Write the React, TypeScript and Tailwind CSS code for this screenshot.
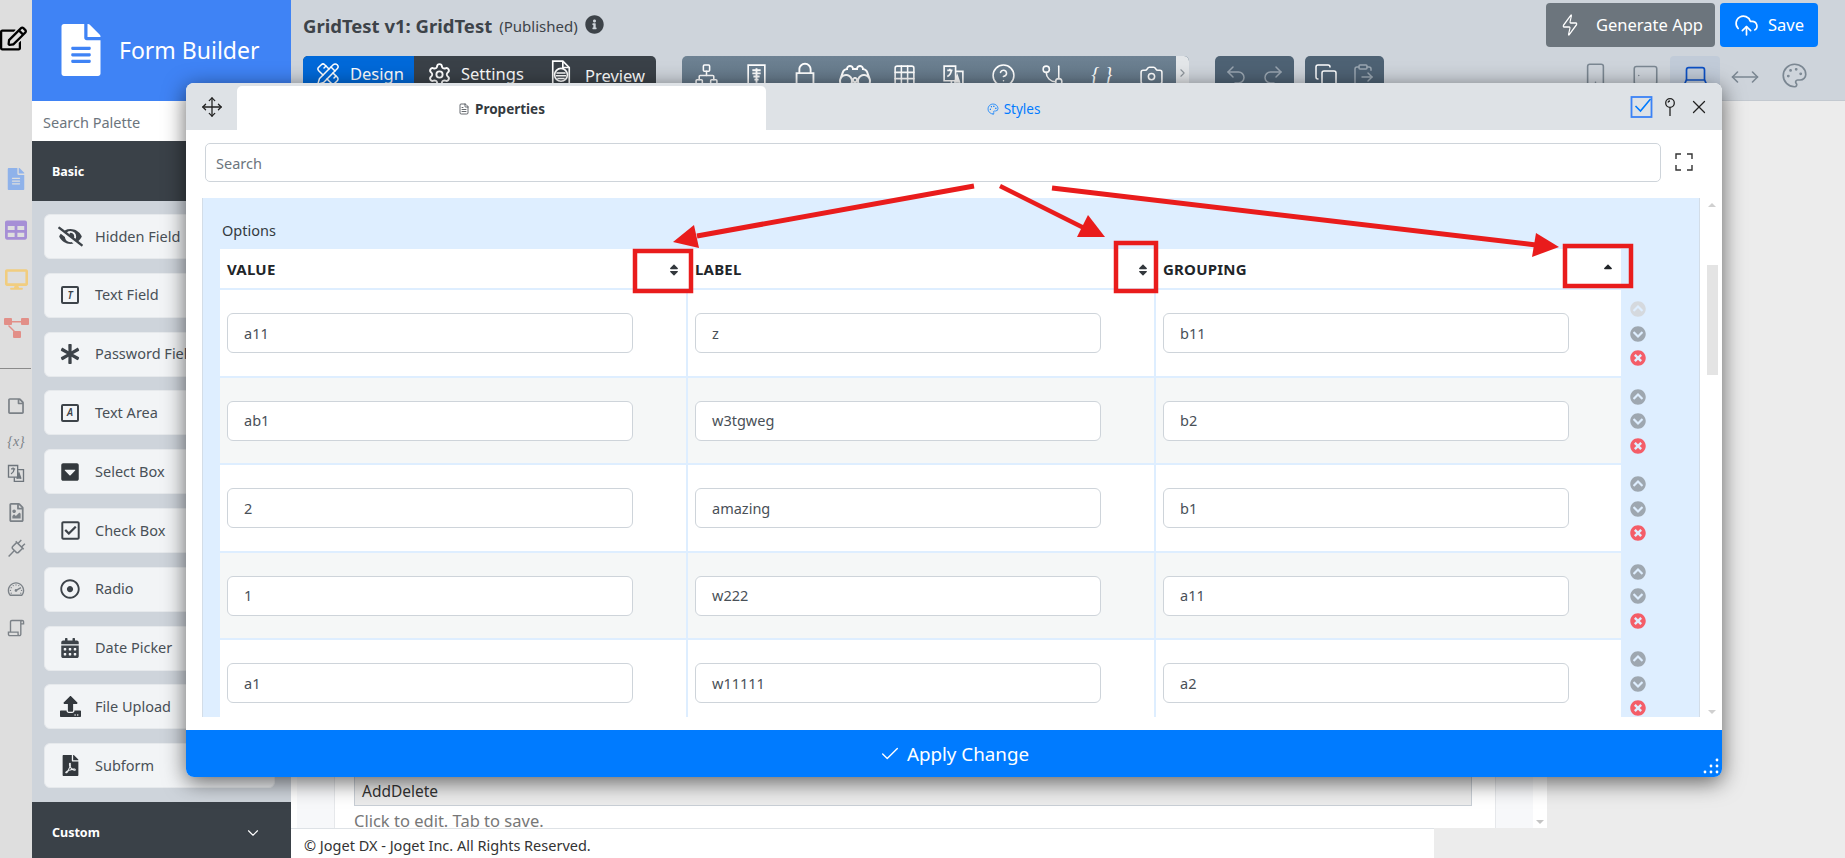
import React from "react";
import {
  Network, Grid3x3, CircleHelp, GitBranch, Camera, Undo2, Redo2, Copy, ClipboardPaste,
  Smartphone, Tablet, Laptop, MoveHorizontal, Palette, CloudUpload, Zap, Settings, FileText,
  Move, X, Check, PencilRuler, ChevronDown, ChevronRight,
} from "lucide-react";
import {
  FaEyeSlash, FaAsterisk, FaCaretSquareDown, FaRegCheckSquare, FaRegDotCircle, FaCalendarAlt, FaUpload, FaFilePdf,
  FaFileAlt, FaRegEdit, FaTable, FaDesktop, FaRegStickyNote, FaRegFileImage, FaInfoCircle, FaSort, FaSortUp, FaChevronCircleUp,
  FaChevronCircleDown, FaTimesCircle,
} from "react-icons/fa";
import { LiaPlugSolid, LiaTachometerAltSolid, LiaScrollSolid, LiaBinocularsSolid, LiaLockSolid } from "react-icons/lia";

// boxed letter used by Text Field / Text Area
const LetterBox = ({ letter }: { letter: string }) => (
  <span className="w-[18px] h-[18px] border-2 border-[#3d4349] rounded-[2px] flex items-center justify-center text-[10px] italic font-semibold text-[#3d4349]">
    {letter}
  </span>
);

const TranslateIcon = ({ className }: { className: string }) => (
  <svg viewBox="0 0 24 24" fill="none" stroke="currentColor" strokeWidth="1.6" className={className}>
    <path d="M3 3h11v14H3z" />
    <path d="M14 8h7v14H10v-5" />
    <path d="M6 7h5M8.500 5.500V7M10 7c-.5 3-2 5-4 6" />
    <path d="M13 19l2.500-7 2.500 7" fill="currentColor" />
  </svg>
);

const SpineIcon = () => (
  <svg viewBox="0 0 24 24" className="w-[25px] h-[25px]" fill="none" stroke="currentColor" strokeWidth="1.600">
    <path d="M4 2h16v20H4z" />
    <path d="M12 5v14M8 7h8M8 10h8M9 13h6M10 16h4" strokeWidth="1.800" />
  </svg>
);

const PreviewIcon = () => (
  <svg viewBox="0 0 24 28" className="w-[22px] h-[26px] mt-[-4px]" fill="none" stroke="currentColor" strokeWidth="1.800">
    <path d="M14 1H3v26h18V8z" />
    <path d="M14 1v7h7" />
    <circle cx="12" cy="16" r="7" fill="#3a4148" />
    <path d="M7 14h10M6.500 17h11M8 20h8" strokeWidth="1.400" />
  </svg>
);

const palette = [
  { icon: <FaEyeSlash size={25} className="text-[#3d4349]" />, label: "Hidden Field" },
  { icon: <LetterBox letter="T" />, label: "Text Field" },
  { icon: <FaAsterisk size={20} className="text-[#3d4349]" />, label: "Password Field" },
  { icon: <LetterBox letter="A" />, label: "Text Area" },
  { icon: <FaCaretSquareDown size={20} className="text-[#33383d]" />, label: "Select Box" },
  { icon: <FaRegCheckSquare size={21} className="text-[#3d4349]" />, label: "Check Box" },
  { icon: <FaRegDotCircle size={20} className="text-[#3d4349]" />, label: "Radio" },
  { icon: <FaCalendarAlt size={20} className="text-[#3d4349]" />, label: "Date Picker" },
  { icon: <FaUpload size={21} className="text-[#33383d]" />, label: "File Upload" },
  { icon: <FaFilePdf size={21} className="text-[#33383d]" />, label: "Subform" },
];

const rows = [
  ["a11", "z", "b11"],
  ["ab1", "w3tgweg", "b2"],
  ["2", "amazing", "b1"],
  ["1", "w222", "a11"],
  ["a1", "w11111", "a2"],
];

const Rail = () => (
  <div className="w-[32px] shrink-0 bg-[#dedede] flex flex-col items-center">
    <FaRegEdit size={27} className="mt-[25px] ml-[-5px] text-black" />
    <FaFileAlt size={22} className="mt-[116px] text-[#8fb2ea]" />
    <FaTable size={22} className="mt-[29px] text-[#a68fd6]" />
    <FaDesktop size={23} className="mt-[27px] text-[#f1cd7f]" />
    <svg viewBox="0 0 25 20" className="mt-[27px] w-[25px] h-[20px] text-[#e28f88]" fill="currentColor">
      <rect x="0" y="0" width="8" height="7" rx="1" />
      <rect x="17" y="0" width="8" height="7" rx="1" />
      <rect x="9" y="13" width="8" height="7" rx="1" />
      <path d="M8 3h9v1.500H8zM5 7l6 6-1 1-6-6z" />
    </svg>
    <div className="w-full h-px bg-[#8a8a8a] mt-[30px] -ml-[3px]" />
    <FaRegStickyNote size={18} className="mt-[28px] text-[#7b8187] -scale-y-100" />
    <span className="mt-[17px] text-[14px] italic text-[#7b8187] font-['Liberation_Serif',serif] h-[20px] leading-[20px]">{"{x}"}</span>
    <TranslateIcon className="mt-[11px] w-[20px] h-[20px] text-[#6e757c]" />
    <FaRegFileImage size={19} className="mt-[20px] text-[#7b8187]" />
    <LiaPlugSolid size={23} className="mt-[15px] text-[#7b8187]" />
    <LiaTachometerAltSolid size={22} className="mt-[18px] text-[#7b8187]" />
    <LiaScrollSolid size={22} className="mt-[17px] text-[#7b8187]" />
  </div>
);

const Sidebar = () => (
  <div className="w-[259px] shrink-0 flex flex-col bg-[#ced4db]">
    <div className="h-[101px] bg-[#3f83f5] flex items-center text-white">
      <FaFileAlt size={52} className="ml-[23px] mt-[-2px]" />
      <span className="ml-[12px] text-[23px] leading-none">Form Builder</span>
    </div>
    <div className="h-[40px] bg-white flex items-center pl-[11px] pt-[3px] text-[14.500px] text-[#6c757d]">Search Palette</div>
    <div className="h-[60px] bg-[#3a4148] flex items-center pl-[20px] pt-[3px] text-[12.500px] font-bold text-white">Basic</div>
    <div className="flex-1 flex flex-col gap-[13.800px] pt-[13px] pl-[12px] pr-[16px]">
      {palette.map((item) => (
        <div key={item.label} className="h-[45px] shrink-0 flex items-center bg-[#f2f4f6] border border-[#e6e9ec] rounded-[6px] whitespace-nowrap overflow-hidden">
          <span className="w-[50px] shrink-0 flex justify-center">{item.icon}</span>
          <span className="text-[14.500px] text-[#495057]">{item.label}</span>
        </div>
      ))}
    </div>
    <div className="h-[56px] bg-[#3a4148] flex items-center justify-between pl-[20px] pr-[29px] pt-[6px] text-[12.500px] font-bold text-white">
      Custom
      <ChevronDown size={18} strokeWidth={1.5} />
    </div>
  </div>
);

const Topbar = () => (
  <div className="h-[101px] shrink-0 bg-[#ced4db] border-b border-[#c3c9d0] flex flex-col pl-[12px] pr-[27px]">
    <div className="h-[47px] pt-[3px] flex">
      <div className="flex items-center h-[44px] mt-[1px] text-[#3d4349]">
        <span className="text-[18.500px] font-bold">GridTest v1: GridTest</span>
        <span className="ml-[7px] text-[15px]">(Published)</span>
        <FaInfoCircle size={19} className="ml-[7px] mt-[-3px]" />
      </div>
      <button className="ml-auto w-[169px] h-[44px] bg-[#6c757d] rounded-[4px] text-white text-[16.500px] flex items-center justify-center gap-[14px]">
        <Zap size={24} strokeWidth={1.5} className="scale-x-75" />Generate App
      </button>
      <button className="ml-[5px] w-[98px] h-[44px] bg-[#007bff] rounded-[4px] text-white text-[16.500px] flex items-center justify-center gap-[9px]">
        <CloudUpload size={25} strokeWidth={1.6} />Save
      </button>
    </div>
    <div className="mt-[9px] h-[40px] flex text-white text-[16.500px]">
      <div className="flex h-full rounded-[5px] overflow-hidden bg-[#3a4148]">
        <div className="w-[111px] bg-[#0069d9] flex items-start pt-[6px] pl-[13px] gap-[10px]"><PencilRuler size={24} strokeWidth={1.5} />Design</div>
        <div className="w-[122px] flex items-start pt-[6px] pl-[13px] gap-[9px]"><Settings size={25} strokeWidth={1.8} />Settings</div>
        <div className="w-[120px] flex items-start pt-[8px] pl-[14px] gap-[13px]"><PreviewIcon />Preview</div>
      </div>
      <div className="ml-[26px] flex h-full rounded-[5px] overflow-hidden bg-gradient-to-b from-[#6e8293] to-[#5f7384]">
        <span className="w-[49.400px] flex justify-center pt-[7px]"><Network size={25} strokeWidth={1.5} /></span>
        <span className="w-[49.400px] flex justify-center pt-[7px]"><SpineIcon /></span>
        <span className="w-[49.400px] flex justify-center pt-[4px]"><LiaLockSolid size={30} /></span>
        <span className="w-[49.400px] flex justify-center pt-[4px]"><LiaBinocularsSolid size={32} /></span>
        <span className="w-[49.400px] flex justify-center pt-[7px]"><Grid3x3 size={25} strokeWidth={1.5} /></span>
        <span className="w-[49.400px] flex justify-center pt-[7px]"><TranslateIcon className="w-[25px] h-[25px]" /></span>
        <span className="w-[49.400px] flex justify-center pt-[7px]"><CircleHelp size={25} strokeWidth={1.5} /></span>
        <span className="w-[49.400px] flex justify-center pt-[7px]"><GitBranch size={25} strokeWidth={1.5} className="-scale-x-100" /></span>
        <span className="w-[49.400px] flex justify-center pt-[3px] text-[20px] italic font-['Liberation_Serif',serif]">{"{ }"}</span>
        <span className="w-[49.400px] flex justify-center pt-[7px]"><Camera size={25} strokeWidth={1.5} /></span>
        <span className="w-[13px] bg-[#e3e6e9] rounded-r-[5px] flex items-start pt-[10px] justify-center text-[#8f969d]"><ChevronRight size={14} /></span>
      </div>
      <div className="ml-[26px] w-[79px] h-full rounded-[5px] bg-[#4e6274] flex justify-around px-[2px] pt-[7px] text-[#9aa6b1]">
        <Undo2 size={24} strokeWidth={1.5} /><Redo2 size={24} strokeWidth={1.5} />
      </div>
      <div className="ml-[11px] w-[79px] h-full rounded-[5px] bg-[#4e6274] flex justify-around px-[2px] pt-[7px] text-white">
        <Copy size={24} strokeWidth={1.5} /><ClipboardPaste size={24} strokeWidth={1.5} className="text-[#9aa6b1]" />
      </div>
      <div className="ml-auto flex h-full text-[#7b8792]">
        <span className="w-[50px] flex justify-center pt-[6px]"><Smartphone size={27} strokeWidth={1.4} /></span>
        <span className="w-[50px] flex justify-center pt-[6px]"><Tablet size={27} strokeWidth={1.4} className="rotate-90" /></span>
        <span className="w-[50px] flex justify-center pt-[6px] bg-[#c1cbd8] rounded-[4px] text-[#0c50c4]"><Laptop size={27} strokeWidth={1.5} /></span>
        <span className="w-[50px] flex justify-center pt-[6px]"><MoveHorizontal size={30} strokeWidth={1.3} /></span>
        <span className="w-[48px] flex justify-center pt-[6px]"><Palette size={27} strokeWidth={1.5} /></span>
      </div>
    </div>
  </div>
);

const Canvas = () => (
  <div className="flex-1 min-h-0 bg-[#ececec] flex flex-col">
    <div className="flex-1 min-h-0 w-[1256px] bg-white flex pl-[6px]">
      <div className="w-[38px] bg-[#f7f8fa] border-r border-[#e6e8eb]" />
      <div className="flex-1 flex flex-col justify-end pl-[19px] pr-[23px]">
        <div className="h-[34px] shrink-0 bg-[#ececec] border border-[#c8ced5] flex items-center pl-[7px] pt-[6px] text-[15.500px] text-[#333]">AddDelete</div>
        <div className="h-[22px] shrink-0 text-[16.500px] leading-[30px] text-[#777]">Click to edit. Tab to save.</div>
      </div>
      <div className="w-[38px] bg-[#f7f8fa] border-l border-[#e6e8eb]" />
      <div className="w-[14px] bg-white flex items-end justify-center pb-[4px]">
        <span className="w-0 h-0 border-x-[4px] border-x-transparent border-t-[4px] border-t-[#c4c4c4]" />
      </div>
    </div>
    <div className="h-[30px] shrink-0 w-[1143px] bg-white border-t border-[#dee2e6] flex items-center pl-[13px] pt-[5px] text-[14.500px] text-[#333]">
      © Joget DX - Joget Inc. All Rights Reserved.
    </div>
  </div>
);

const InputBox = ({ value }: { value: string }) => (
  <div className="h-[40px] w-[406px] bg-white border border-[#ced4da] rounded-[6px] flex items-center pl-[16px] pt-[1px] text-[14.500px] text-[#495057]">
    {value}
  </div>
);

const Modal = () => (
  <div className="absolute left-[186px] top-[83px] w-[1536px] h-[694px] bg-white rounded-[8px] overflow-hidden shadow-[0_5px_22px_rgba(0,0,0,0.6)] flex flex-col">
    <div className="h-[47px] shrink-0 bg-[#dee2e6] flex items-end">
      <span className="w-[51px] h-full flex items-center justify-center text-[#222]"><Move size={22} strokeWidth={1.4} /></span>
      <div className="w-[529px] h-[44px] bg-white rounded-t-[5px] flex items-center justify-center gap-[5px] pt-[2px] text-[13.500px] font-bold text-[#343a40]">
        <FileText size={12} strokeWidth={1.5} />Properties
      </div>
      <div className="w-[495px] h-[44px] flex items-center justify-center gap-[5px] pt-[2px] text-[13.500px] text-[#007bff]">
        <Palette size={12} strokeWidth={1.5} />Styles
      </div>
      <div className="ml-auto h-full flex items-center pr-[12px] text-[#222]">
        <svg viewBox="0 0 22 22" className="w-[23px] h-[22px]" fill="none">
          <rect x="1" y="1" width="20" height="20" stroke="#3b82f6" strokeWidth="1.800" />
          <path d="M5 10l5 5 10-12" stroke="#007bff" strokeWidth="1.600" />
        </svg>
        <svg viewBox="0 0 14 20" className="ml-[10px] w-[14px] h-[20px]" fill="none" stroke="#222" strokeWidth="1.300">
          <circle cx="7" cy="6" r="4.300" />
          <path d="M7 10.500V19M5 5.500a2 2 0 0 1 2-1.500" />
        </svg>
        <X size={22} strokeWidth={1.4} className="ml-[11px]" />
      </div>
    </div>
    <div className="flex-1 min-h-0 flex flex-col">
      <div className="h-[68px] shrink-0 flex items-start pt-[13px] pl-[19px]">
        <div className="w-[1456px] h-[39px] border border-[#ced4da] rounded-[5px] flex items-center pl-[10px] pt-[3px] text-[14.500px] text-[#6c757d]">Search</div>
        <svg viewBox="0 0 18 18" className="ml-[14px] mt-[10px] w-[18px] h-[18px]" fill="none" stroke="#333" strokeWidth="1.400">
          <path d="M1 6V1h5M12 1h5v5M17 12v5h-5M6 17H1v-5" />
        </svg>
      </div>
      <div className="flex-1 min-h-0 flex pl-[16px] pb-[13px]">
        <div className="w-[1499px] h-full bg-[#deeeff] border-l border-r border-[#d3dde8] pl-[17px] overflow-hidden">
          <div className="h-[51px] flex items-center pt-[15px] pl-[2px] text-[14.500px] text-[#343a40]">Options</div>
          <div className="w-[1401px] h-[39px] bg-white flex items-center text-[15px] font-bold text-[#212529] tracking-[0.2px] pt-[2px]">
            <div className="w-[467px] pl-[7px] pr-[5px] flex items-center justify-between">VALUE<FaSort size={14} className="text-[#33383d] mr-[1px]" /></div>
            <div className="w-[468px] pl-[8px] pr-[5px] flex items-center justify-between">LABEL<FaSort size={14} className="text-[#33383d]" /></div>
            <div className="w-[466px] pl-[8px] pr-[5px] flex items-center justify-between">GROUPING<FaSortUp size={14} className="text-[#212529] mr-[1px]" /></div>
          </div>
          {rows.map((row, i) => (
            <div key={i} className="flex h-[87.500px] items-stretch">
              <div className={`w-[1401px] flex border-t-2 border-[#deeeff] ${i % 2 === 1 ? "bg-[#f5f7f7]" : "bg-white"}`}>
                <div className="w-[468px] pl-[7px] pt-[23px] border-r-2 border-[#deeeff]"><InputBox value={row[0]} /></div>
                <div className="w-[468px] pl-[7px] pt-[23px] border-r-2 border-[#deeeff]"><InputBox value={row[1]} /></div>
                <div className="w-[465px] pl-[7px] pt-[23px]"><InputBox value={row[2]} /></div>
              </div>
              <div className="flex-1 flex flex-col gap-[8.500px] pt-[13px] pl-[9px] text-[#9ea7b0]">
                <FaChevronCircleUp size={16} className={i === 0 ? "text-[#d5d9de]" : ""} />
                <FaChevronCircleDown size={16} />
                <FaTimesCircle size={16} className="text-[#f45d68]" />
              </div>
            </div>
          ))}
        </div>
        <div className="w-[17px] relative ml-[5px]">
          <span className="absolute left-[3px] top-[5px] w-0 h-0 border-x-[4px] border-x-transparent border-b-[4px] border-b-[#d0d0d0]" />
          <span className="absolute left-[2px] top-[67px] w-[11px] h-[110px] bg-[#e4e4e4]" />
          <span className="absolute left-[3px] bottom-[3px] w-0 h-0 border-x-[4px] border-x-transparent border-t-[4px] border-t-[#d0d0d0]" />
        </div>
      </div>
    </div>
    <div className="h-[47px] shrink-0 bg-[#007bff] relative flex items-center justify-center gap-[6px] pt-[1px] text-white text-[18.800px]">
      <Check size={22} strokeWidth={1.5} />Apply Change
      <svg viewBox="0 0 16 16" className="absolute right-[3px] bottom-[3px] w-[16px] h-[16px]" fill="white">
        <circle cx="14" cy="2" r="1.400" /><circle cx="8" cy="8" r="1.400" /><circle cx="14" cy="8" r="1.400" />
        <circle cx="2" cy="14" r="1.400" /><circle cx="8" cy="14" r="1.400" /><circle cx="14" cy="14" r="1.400" />
      </svg>
    </div>
  </div>
);

// red annotation arrows and boxes drawn over the screenshot
const Annotations = () => (
  <svg className="absolute inset-0 w-[1845px] h-[858px] pointer-events-none" viewBox="0 0 1845 858" fill="none">
    <g stroke="#e91c1c">
      <path d="M974 186L697 236" strokeWidth="5" />
      <path d="M1000 186L1084 228" strokeWidth="4.500" />
      <path d="M1052 188L1536 245" strokeWidth="5" />
      <rect x="635" y="251" width="56" height="40" strokeWidth="4.500" />
      <rect x="1116" y="243" width="40" height="48" strokeWidth="4.500" />
      <rect x="1565" y="246" width="66" height="40" strokeWidth="4.500" />
    </g>
    <g fill="#e91c1c">
      <path d="M673 242L694 225L699 248Z" />
      <path d="M1105 237L1088 215L1077 237Z" />
      <path d="M1559 247L1536 233L1532 257Z" />
    </g>
  </svg>
);

export default function App() {
  return (
    <div className="relative w-[1845px] h-[858px] overflow-hidden flex font-['Noto_Sans',sans-serif] bg-[#ececec]">
      <Rail />
      <Sidebar />
      <div className="flex-1 min-w-0 flex flex-col">
        <Topbar />
        <Canvas />
      </div>
      <Modal />
      <Annotations />
    </div>
  );
}
